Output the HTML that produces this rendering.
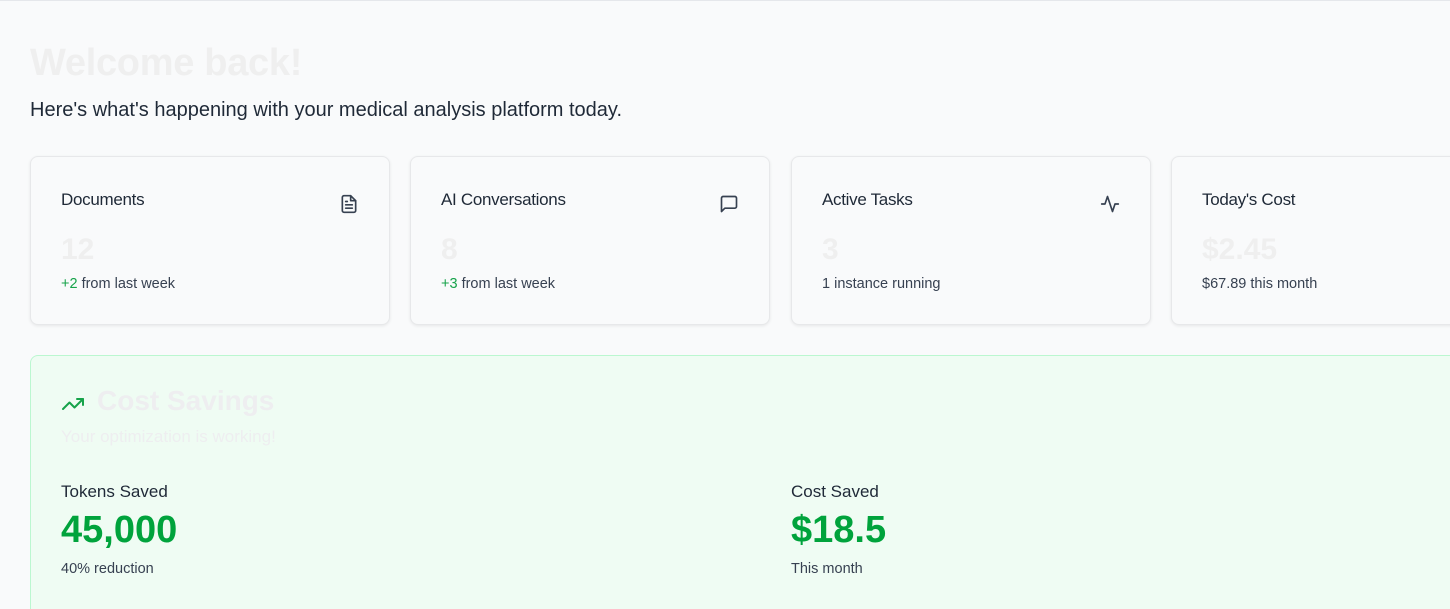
<!DOCTYPE html>
<html style="overflow:hidden;width:1450px;height:609px"><head><style>
*{box-sizing:border-box;margin:0;padding:0}
body{width:1450px;height:609px;overflow:hidden;background:#f9fafb;font-family:"Liberation Sans",sans-serif;color:#1f2937;position:relative}
.line{position:absolute;left:0;top:0;width:1450px;height:1px;background:#e5e7eb}
h1{position:absolute;left:30px;top:42px;font-size:38px;font-weight:700;color:#efefef;letter-spacing:-0.3px}
.sub{position:absolute;left:30px;top:99px;font-size:20px;color:#1f2937}
.card{position:absolute;top:156px;width:360px;height:169px;background:#f9fafb;border:1px solid #e7e8ea;border-radius:8px;box-shadow:0 1px 3px rgba(0,0,0,.08)}
.card .t{position:absolute;left:30px;top:33px;font-size:17px;color:#1f2937;letter-spacing:-0.3px}
.card .v{position:absolute;left:30px;top:76px;font-size:30px;font-weight:700;color:#efefef}
.card .s{position:absolute;left:30px;top:119px;font-size:14.5px;color:#374151}
.card svg{position:absolute;left:308px;top:37px}
.g{color:#16a34a}
.sav{position:absolute;left:30px;top:355px;width:1440px;height:280px;background:#effcf3;border:1px solid #bbf7d0;border-radius:8px}
.sav h2{position:absolute;left:66px;top:29px;font-size:28px;font-weight:700;color:#eeeef0}
.sav .d{position:absolute;left:30px;top:71px;font-size:17px;color:#eeeef0}
.sav svg{position:absolute;left:30px;top:36px}
.lbl{position:absolute;font-size:17px;color:#1f2937;top:126px}
.big{position:absolute;font-size:38px;font-weight:700;color:#00a33c;top:153px}
.sm{position:absolute;font-size:14.5px;color:#374151;top:205px}
</style></head><body>
<div class="line"></div>
<h1>Welcome back!</h1>
<div class="sub">Here's what's happening with your medical analysis platform today.</div>

<div class="card" style="left:30px"><div class="t">Documents</div>
<svg width="20" height="20" viewBox="0 0 24 24" fill="none" stroke="#374151" stroke-width="2" stroke-linecap="round" stroke-linejoin="round"><path d="M14 2H6a2 2 0 0 0-2 2v16a2 2 0 0 0 2 2h12a2 2 0 0 0 2-2V8z"/><path d="M14 2v6h6M16 13H8M16 17H8M10 9H8"/></svg>
<div class="v">12</div><div class="s"><span class="g">+2</span> from last week</div></div>

<div class="card" style="left:410px"><div class="t">AI Conversations</div>
<svg width="20" height="20" viewBox="0 0 24 24" fill="none" stroke="#374151" stroke-width="2" stroke-linecap="round" stroke-linejoin="round"><path d="M21 15a2 2 0 0 1-2 2H7l-4 4V5a2 2 0 0 1 2-2h14a2 2 0 0 1 2 2z"/></svg>
<div class="v">8</div><div class="s"><span class="g">+3</span> from last week</div></div>

<div class="card" style="left:791px"><div class="t">Active Tasks</div>
<svg width="20" height="20" viewBox="0 0 24 24" fill="none" stroke="#374151" stroke-width="2" stroke-linecap="round" stroke-linejoin="round"><path d="M22 12h-4l-3 9L9 3l-3 9H2"/></svg>
<div class="v">3</div><div class="s">1 instance running</div></div>

<div class="card" style="left:1171px"><div class="t">Today's Cost</div>
<div class="v">$2.45</div><div class="s">$67.89 this month</div></div>

<div class="sav">
<svg width="24" height="24" viewBox="0 0 24 24" fill="none" stroke="#16a34a" stroke-width="2" stroke-linecap="round" stroke-linejoin="round"><path d="M22 7l-8.5 8.5-5-5L2 17"/><path d="M16 7h6v6"/></svg>
<h2>Cost Savings</h2>
<div class="d">Your optimization is working!</div>
<div class="lbl" style="left:30px">Tokens Saved</div>
<div class="big" style="left:30px">45,000</div>
<div class="sm" style="left:30px">40% reduction</div>
<div class="lbl" style="left:760px">Cost Saved</div>
<div class="big" style="left:760px">$18.5</div>
<div class="sm" style="left:760px">This month</div>
</div>
</body></html>
